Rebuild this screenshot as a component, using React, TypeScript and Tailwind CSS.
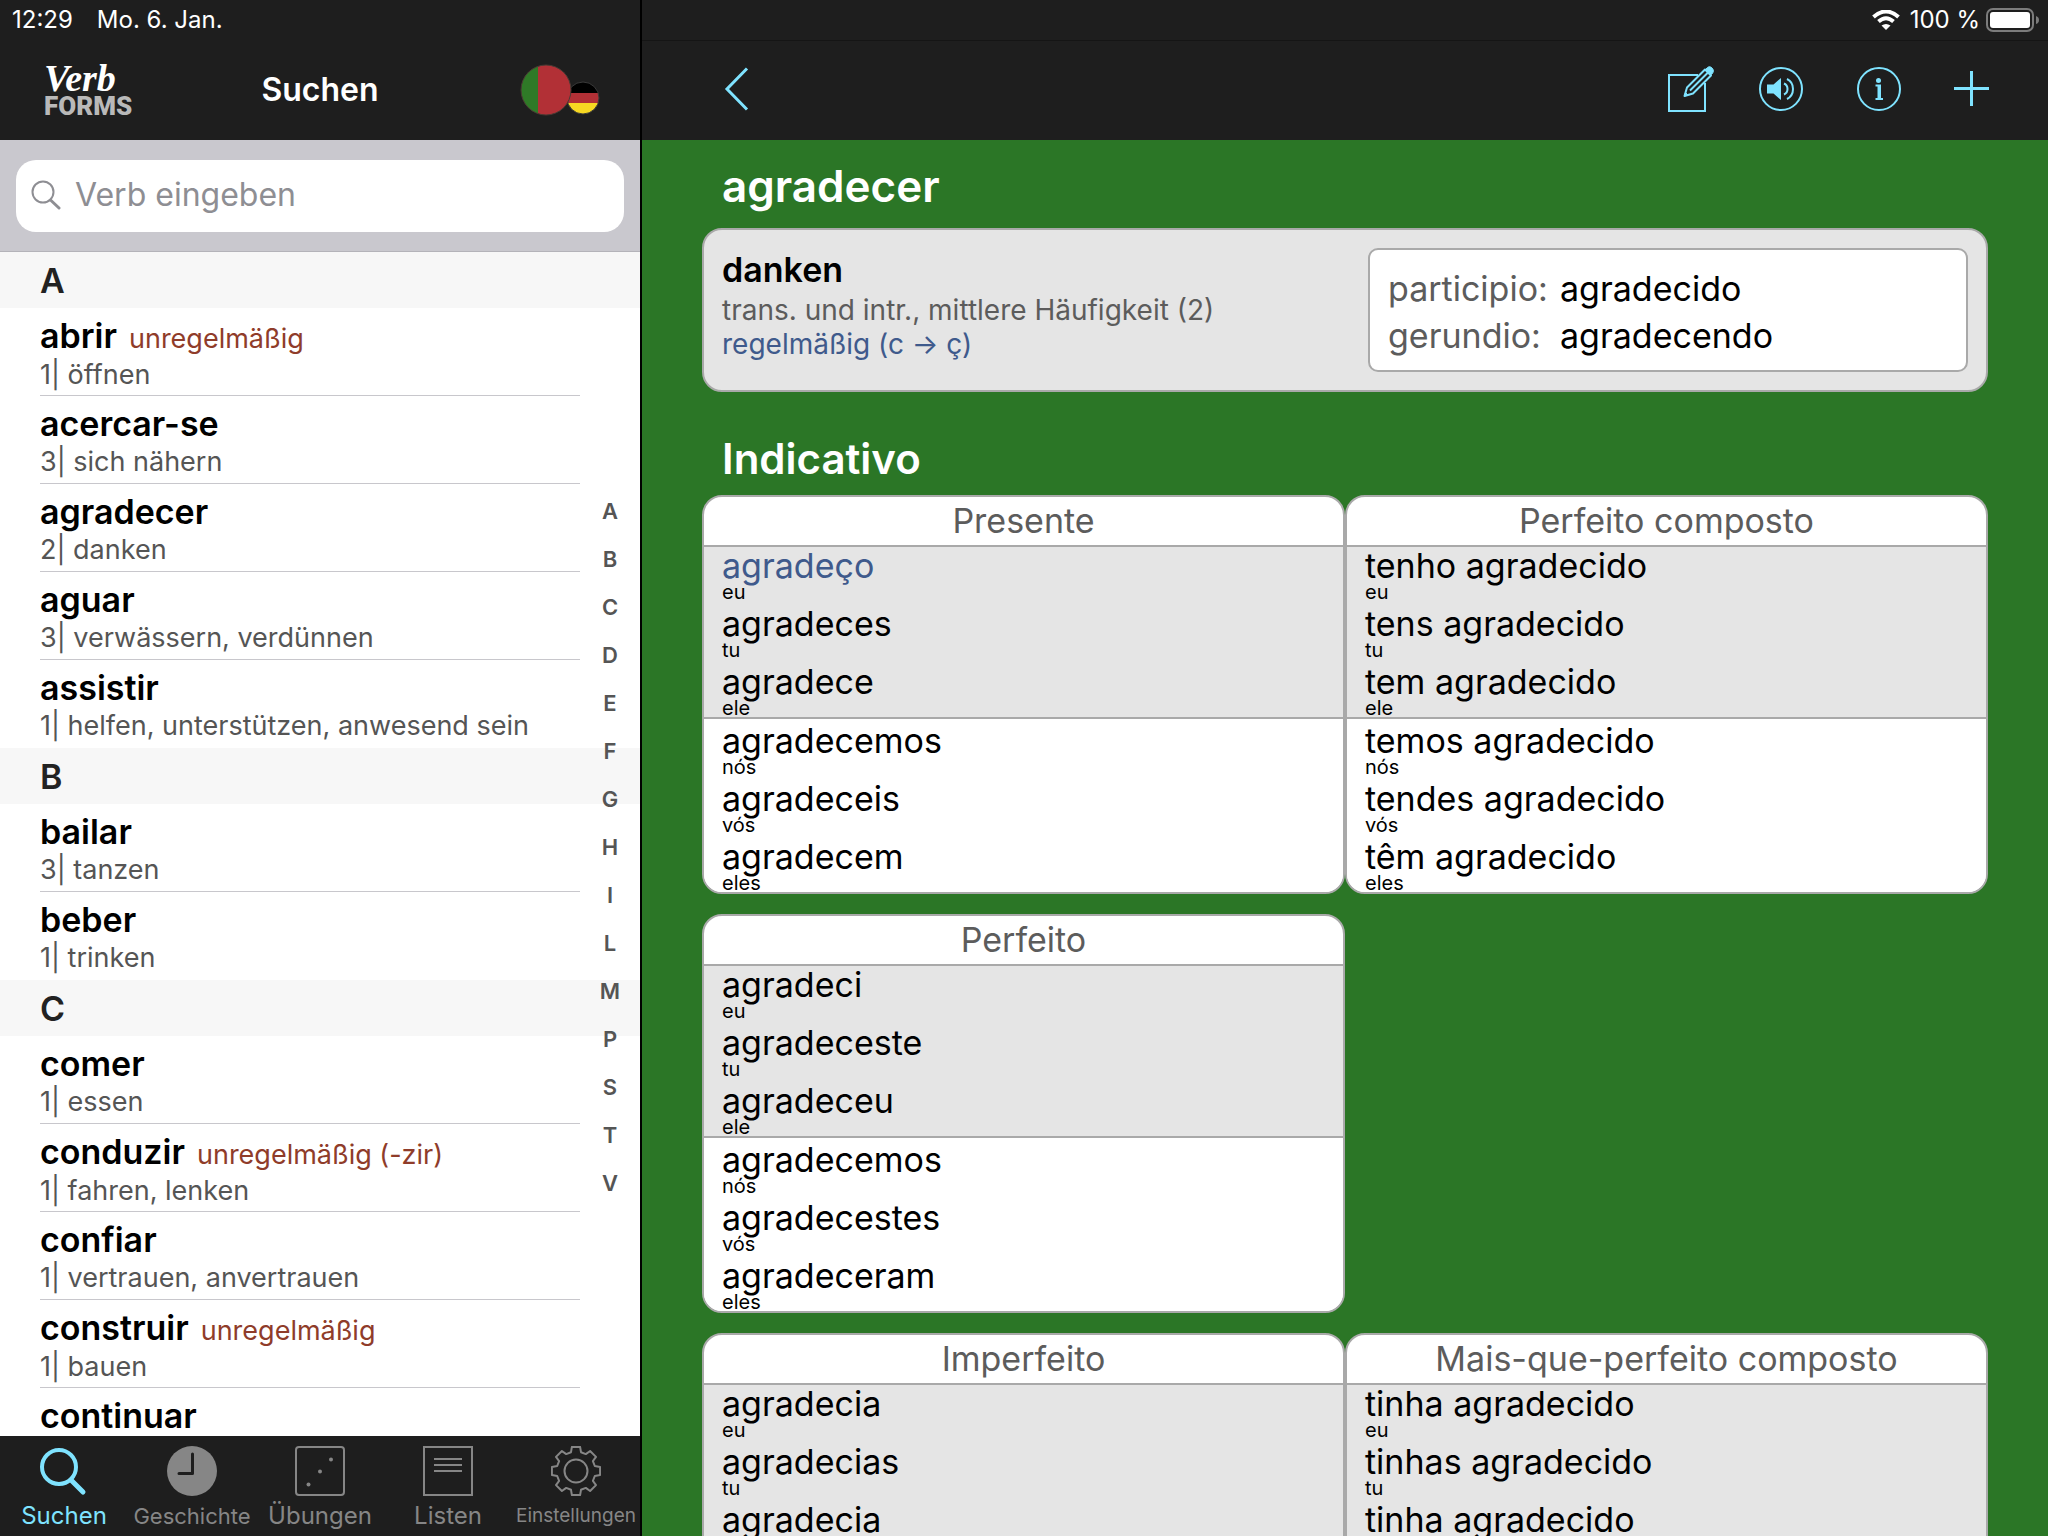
import React from "react";

type Verb = { name: string; note?: string; rank?: number; meaning?: string };
type Section = { letter: string; verbs: Verb[] };
type Tense = { title: string; forms: string[]; highlight?: number; alone?: boolean };

const sections: Section[] = [
  {
    letter: "A",
    verbs: [
      { name: "abrir", note: "unregelmäßig", rank: 1, meaning: "öffnen" },
      { name: "acercar-se", rank: 3, meaning: "sich nähern" },
      { name: "agradecer", rank: 2, meaning: "danken" },
      { name: "aguar", rank: 3, meaning: "verwässern, verdünnen" },
      { name: "assistir", rank: 1, meaning: "helfen, unterstützen, anwesend sein" },
    ],
  },
  {
    letter: "B",
    verbs: [
      { name: "bailar", rank: 3, meaning: "tanzen" },
      { name: "beber", rank: 1, meaning: "trinken" },
    ],
  },
  {
    letter: "C",
    verbs: [
      { name: "comer", rank: 1, meaning: "essen" },
      { name: "conduzir", note: "unregelmäßig (-zir)", rank: 1, meaning: "fahren, lenken" },
      { name: "confiar", rank: 1, meaning: "vertrauen, anvertrauen" },
      { name: "construir", note: "unregelmäßig", rank: 1, meaning: "bauen" },
      { name: "continuar" },
    ],
  },
];

const indexLetters = ["A", "B", "C", "D", "E", "F", "G", "H", "I", "L", "M", "P", "S", "T", "V"];
const pronouns = ["eu", "tu", "ele", "nós", "vós", "eles"];

const tenses: Tense[] = [
  {
    title: "Presente",
    forms: ["agradeço", "agradeces", "agradece", "agradecemos", "agradeceis", "agradecem"],
    highlight: 0,
  },
  {
    title: "Perfeito composto",
    forms: [
      "tenho agradecido",
      "tens agradecido",
      "tem agradecido",
      "temos agradecido",
      "tendes agradecido",
      "têm agradecido",
    ],
  },
  {
    title: "Perfeito",
    forms: ["agradeci", "agradeceste", "agradeceu", "agradecemos", "agradecestes", "agradeceram"],
    alone: true,
  },
  { title: "Imperfeito", forms: ["agradecia", "agradecias", "agradecia"] },
  { title: "Mais-que-perfeito composto", forms: ["tinha agradecido", "tinhas agradecido", "tinha agradecido"] },
];

function FlagPair() {
  return (
    <svg width="80" height="52" viewBox="0 0 80 52" aria-hidden="true">
      <defs>
        <clipPath id="pt">
          <circle cx="26" cy="26" r="25" />
        </clipPath>
        <clipPath id="de">
          <circle cx="63" cy="34" r="16" />
        </clipPath>
      </defs>
      <g clipPath="url(#de)">
        <rect x="46" y="17" width="34" height="12" fill="#000" />
        <rect x="46" y="29" width="34" height="10" fill="#b23036" />
        <rect x="46" y="39" width="34" height="12" fill="#f7d822" />
      </g>
      <circle cx="63" cy="34" r="16" fill="none" stroke="#3a3a3a" />
      <g clipPath="url(#pt)">
        <rect x="0" y="0" width="18" height="52" fill="#2f7a27" />
        <rect x="18" y="0" width="34" height="52" fill="#b23036" />
      </g>
      <circle cx="26" cy="26" r="25" fill="none" stroke="#4a3a34" />
    </svg>
  );
}

function GearIcon() {
  const points: string[] = [];
  for (let i = 0; i < 8; i++) {
    const base = (i * Math.PI) / 4;
    [
      [-0.26, 19.5],
      [-0.17, 24.5],
      [0.17, 24.5],
      [0.26, 19.5],
    ].forEach(([da, r]) => {
      points.push(`${(25 + r * Math.sin(base + da)).toFixed(1)},${(25 - r * Math.cos(base + da)).toFixed(1)}`);
    });
  }
  return (
    <svg width="50" height="50" viewBox="0 0 50 50" fill="none" stroke="currentColor" strokeWidth="2" aria-hidden="true">
      <polygon points={points.join(" ")} strokeLinejoin="round" />
      <circle cx="25" cy="25" r="11.5" />
    </svg>
  );
}

const tabs = [
  {
    label: "Suchen",
    size: "text-[24px]",
    icon: (
      <svg width="50" height="50" viewBox="0 0 50 50" fill="none" stroke="currentColor" aria-hidden="true">
        <circle cx="20" cy="21" r="17" strokeWidth="4" />
        <path d="M32 34 L44 46" strokeWidth="5" strokeLinecap="round" />
      </svg>
    ),
  },
  {
    label: "Geschichte",
    size: "text-[22px]",
    icon: (
      <svg width="50" height="50" viewBox="0 0 50 50" fill="none" aria-hidden="true">
        <circle cx="25" cy="25" r="25" fill="currentColor" />
        <path d="M25.5 8 V27.5 H12" stroke="#1e1e1e" strokeWidth="3" strokeLinecap="round" strokeLinejoin="round" />
      </svg>
    ),
  },
  {
    label: "Übungen",
    size: "text-[24px]",
    icon: (
      <svg width="50" height="50" viewBox="0 0 50 50" fill="none" stroke="currentColor" strokeWidth="2" aria-hidden="true">
        <rect x="1" y="1" width="48" height="48" rx="3" />
        <g fill="currentColor" stroke="none">
          <circle cx="36" cy="13.5" r="2" />
          <circle cx="25" cy="25.5" r="2" />
          <circle cx="13.5" cy="38.5" r="2" />
        </g>
      </svg>
    ),
  },
  {
    label: "Listen",
    size: "text-[24px]",
    icon: (
      <svg width="50" height="50" viewBox="0 0 50 50" fill="none" stroke="currentColor" strokeWidth="2" aria-hidden="true">
        <rect x="1" y="1" width="48" height="48" />
        <path d="M11 13 H39 M11 19 H39 M11 25 H39" />
      </svg>
    ),
  },
  { label: "Einstellungen", size: "text-[19px]", icon: <GearIcon /> },
];

function VerbRow({ verb, last }: { verb: Verb; last: boolean }) {
  return (
    <li className={`mr-[60px] ml-10 h-[88px] ${last ? "" : "border-b border-[#c8c7cc]"}`}>
      <button type="button" className="block w-full pt-2 text-left whitespace-nowrap">
        <span className="block text-[34px] leading-10 font-semibold text-black">
          {verb.name}
          {verb.note && <span className="ml-3 text-[27px] leading-9 font-normal text-[#8f3c2a]">{verb.note}</span>}
        </span>
        {verb.meaning && (
          <span className="block text-[27px] leading-9 text-[#555]">
            {verb.rank}| {verb.meaning}
          </span>
        )}
      </button>
    </li>
  );
}

function Sidebar() {
  return (
    <aside className="flex min-h-0 min-w-0 flex-col bg-white">
      <header className="h-[140px] shrink-0 bg-[#1e1e1e] text-white">
        <div className="flex h-10 items-center gap-6 px-3 text-[24px] leading-8">
          <span>12:29</span>
          <span>Mo. 6. Jan.</span>
        </div>
        <div className="grid h-[100px] grid-cols-[1fr_auto_1fr] items-center px-10">
          <div className="flex flex-col pl-1">
            <span className="font-['Liberation_Serif',serif] text-[38px] leading-8 font-bold italic">Verb</span>
            <span className="font-['Roboto',sans-serif] text-[26px] leading-6 font-black text-[#b9b9b9]">FORMS</span>
          </div>
          <h2 className="text-[32px] leading-10 font-semibold">Suchen</h2>
          <button type="button" aria-label="Sprache" className="justify-self-end">
            <FlagPair />
          </button>
        </div>
      </header>
      <div className="h-28 shrink-0 border-b border-[#b4b3b9] bg-[#c9c8ce] px-4 pt-5">
        <label className="flex h-[72px] items-center rounded-[20px] bg-white px-[15px] pb-1">
          <svg width="32" height="32" viewBox="0 0 32 32" fill="none" stroke="#8e8e93" strokeWidth="2" aria-hidden="true">
            <circle cx="12" cy="14" r="10.5" />
            <path d="M19.5 22 L28 30" strokeWidth="3" strokeLinecap="round" />
          </svg>
          <input
            type="search"
            aria-label="Verb eingeben"
            placeholder="Verb eingeben"
            className="ml-3 h-12 min-w-0 flex-1 bg-transparent text-[32px] leading-10 outline-none placeholder:text-[#8e8e93]"
          />
        </label>
      </div>
      <div className="relative min-h-0 flex-1">
        <div className="h-full overflow-hidden">
          {sections.map((section) => (
            <section key={section.letter}>
              <h3 className="flex h-14 items-center bg-[#f7f7f7] px-10 pt-0.5 text-[34px] leading-10 font-semibold text-[#222]">
                {section.letter}
              </h3>
              <ul>
                {section.verbs.map((verb, i) => (
                  <VerbRow key={verb.name} verb={verb} last={i === section.verbs.length - 1} />
                ))}
              </ul>
            </section>
          ))}
        </div>
        <nav aria-label="Index" className="absolute inset-y-0 right-4 flex w-7 flex-col justify-center pt-1.5">
          {indexLetters.map((letter) => (
            <button key={letter} type="button" className="h-12 text-center text-[22px] leading-7 font-semibold text-[#555]">
              {letter}
            </button>
          ))}
        </nav>
      </div>
      <nav className="grid h-[100px] shrink-0 grid-cols-5 bg-[#1e1e1e] pt-2.5">
        {tabs.map((tab, i) => (
          <button
            key={tab.label}
            type="button"
            className={`flex min-w-0 flex-col items-center ${i === 0 ? "text-[#7fe3ff]" : "text-[#868686]"}`}
          >
            {tab.icon}
            <span className={`mt-1 leading-8 ${tab.size}`}>{tab.label}</span>
          </button>
        ))}
      </nav>
    </aside>
  );
}

function StatusIcons() {
  return (
    <div className="flex h-10 items-center justify-end pr-2 text-[24px] leading-8 text-white">
      <svg width="28" height="20" viewBox="0 0 28 20" fill="none" aria-hidden="true">
        <path d="M1.5 7 Q14 -4 26.5 7" stroke="white" strokeWidth="4" />
        <path d="M6.5 11.5 Q14 5 21.5 11.5" stroke="white" strokeWidth="4" />
        <path d="M14 20 L9.5 15.5 Q14 12.5 18.5 15.5 Z" fill="white" />
      </svg>
      <span className="mr-1.5 ml-2.5">100 %</span>
      <svg width="54" height="24" viewBox="0 0 54 24" fill="none" aria-hidden="true">
        <rect x="1" y="1" width="46" height="22" rx="6" stroke="#7c7c7c" strokeWidth="2" />
        <rect x="4" y="4" width="40" height="16" rx="3" fill="white" />
        <path d="M50 8 Q53 9 53 12 Q53 15 50 16 Z" fill="#7c7c7c" />
      </svg>
    </div>
  );
}

function Toolbar() {
  return (
    <div className="flex h-[100px] items-center border-t border-[#151515] pr-[58px] pb-1 pl-[82px] text-[#7fe3ff]">
      <button type="button" aria-label="Zurück">
        <svg width="26" height="44" viewBox="0 0 26 44" fill="none" stroke="currentColor" strokeWidth="3" aria-hidden="true">
          <path d="M23 1.5 L3 22 L23 42.5" />
        </svg>
      </button>
      <div className="ml-auto flex items-center">
        <button type="button" aria-label="Bearbeiten">
          <svg width="48" height="48" viewBox="0 0 48 48" fill="none" stroke="currentColor" strokeWidth="2" aria-hidden="true">
            <path d="M30 10 H1 V46 H37 V18" />
            <path d="M16.500 31 L19 22.500 L37 4.500 L43 10.500 L25 28.500 Z" strokeLinejoin="round" />
            <path d="M22 25.500 L40 7.500" />
            <path d="M17.500 27.500 L20 30 L16.500 31 Z" fill="currentColor" strokeWidth="1" />
            <path d="M38 4 Q41 0 44 3 Q47 6 43.500 9.500 Z" fill="currentColor" strokeWidth="1" />
          </svg>
        </button>
        <button type="button" aria-label="Anhören" className="ml-[43px]">
          <svg width="44" height="44" viewBox="0 0 44 44" fill="none" stroke="currentColor" strokeWidth="2" aria-hidden="true">
            <circle cx="22" cy="22" r="21" />
            <path d="M8 17.5 H14.500 L22 11 V33 L14.500 26.500 H8 Z" fill="currentColor" stroke="none" />
            <path d="M25 16.500 Q28.500 18 28.500 22 Q28.500 26 25 27.500" />
            <path d="M28 12 Q34 15 34 22 Q34 29 28 32" />
          </svg>
        </button>
        <button type="button" aria-label="Information" className="ml-[54px]">
          <svg width="44" height="44" viewBox="0 0 44 44" fill="none" stroke="currentColor" strokeWidth="2" aria-hidden="true">
            <circle cx="22" cy="22" r="21" />
            <circle cx="21.5" cy="13.5" r="2.5" fill="currentColor" stroke="none" />
            <path d="M18.500 18.500 H23 V32 M18.500 32 H26" />
            <path d="M22 19 V32" strokeWidth="3" />
          </svg>
        </button>
        <button type="button" aria-label="Hinzufügen" className="ml-[52px]">
          <svg width="37" height="37" viewBox="0 0 37 37" fill="none" stroke="currentColor" strokeWidth="3" aria-hidden="true">
            <path d="M18.500 1 V36 M1 18.500 H36" />
          </svg>
        </button>
      </div>
    </div>
  );
}

function FormGroup({ tense, start }: { tense: Tense; start: number }) {
  return (
    <ul
      className={`flex flex-col gap-1.5 px-[18px] pb-0.5 ${
        start === 0 ? "border-b-2 border-[#a9a9a9] bg-[#e5e5e5]" : "bg-white pt-[3px]"
      }`}
    >
      {tense.forms.slice(start, start + 3).map((form, i) => (
        <li key={i} className="flex flex-col">
          <span className={`text-[34px] leading-[38px] ${tense.highlight === start + i ? "text-[#3f5a8c]" : "text-black"}`}>
            {form}
          </span>
          <span className="text-[20px] leading-[14px] text-black">{pronouns[start + i]}</span>
        </li>
      ))}
    </ul>
  );
}

function TenseCard({ tense }: { tense: Tense }) {
  return (
    <section
      className={`overflow-hidden rounded-[20px] border-2 border-[#a9a9a9] bg-white ${tense.alone ? "col-span-2 mr-[50%]" : ""}`}
    >
      <h3 className="border-b-2 border-[#a9a9a9] text-center text-[34px] leading-[48px] text-[#5c5c5c]">{tense.title}</h3>
      <FormGroup tense={tense} start={0} />
      {tense.forms.length > 3 && <FormGroup tense={tense} start={3} />}
    </section>
  );
}

function Detail() {
  return (
    <main className="flex min-h-0 min-w-0 flex-col border-l-2 border-black bg-[#2b7626]">
      <header className="h-[140px] shrink-0 bg-[#1e1e1e]">
        <StatusIcons />
        <Toolbar />
      </header>
      <div className="min-h-0 flex-1 overflow-hidden px-[60px]">
        <h1 className="px-5 pt-[18px] pb-3.5 text-[44px] leading-[56px] font-semibold text-white">agradecer</h1>
        <section className="grid grid-cols-2 gap-[46px] rounded-[20px] border-2 border-[#a9a9a9] bg-[#e5e5e5] p-[18px]">
          <div className="pt-0.5">
            <h2 className="text-[34px] leading-10 font-semibold text-black">danken</h2>
            <p className="mt-[3px] text-[28px] leading-[34px] text-[#5c5c5c]">trans. und intr., mittlere Häufigkeit (2)</p>
            <p className="text-[28px] leading-[34px] text-[#3f5a8c]">regelmäßig (c → ç)</p>
          </div>
          <dl className="grid h-[124px] grid-cols-[172px_1fr] content-start rounded-[10px] border-2 border-[#a9a9a9] bg-white px-[18px] pt-[15px] text-[34px] leading-[47px]">
            <dt className="text-[#5c5c5c]">participio:</dt>
            <dd className="text-black">agradecido</dd>
            <dt className="text-[#5c5c5c]">gerundio:</dt>
            <dd className="text-black">agradecendo</dd>
          </dl>
        </section>
        <h2 className="px-5 pt-[39px] pb-2 text-[42px] leading-[56px] font-semibold text-white">Indicativo</h2>
        <div className="grid grid-cols-2 gap-y-5">
          {tenses.map((tense) => (
            <TenseCard key={tense.title} tense={tense} />
          ))}
        </div>
      </div>
    </main>
  );
}

export default function App() {
  return (
    <div className="grid h-screen grid-cols-[5fr_11fr] grid-rows-[minmax(0,1fr)] overflow-hidden font-['Inter',sans-serif]">
      <Sidebar />
      <Detail />
    </div>
  );
}
